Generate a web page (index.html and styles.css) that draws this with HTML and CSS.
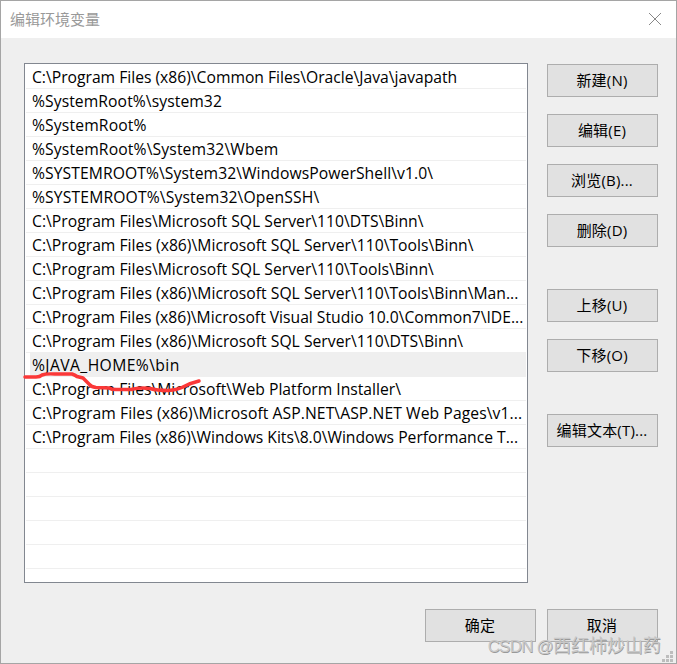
FILE: index.html
```html
<!DOCTYPE html>
<html lang="zh-CN">
<head>
<meta charset="utf-8">
<title>编辑环境变量</title>
<link rel="stylesheet" href="styles.css">
</head>
<body>
<main class="dialog">
  <header class="titlebar">
    <span class="title">编辑环境变量</span>
    <svg class="close" width="14" height="14" viewBox="0 0 14 14"><path d="M1 1L13 13M13 1L1 13"/></svg>
  </header>
  <div class="content">
    <ul class="list">
      <li>C:\Program Files (x86)\Common Files\Oracle\Java\javapath</li>
      <li class="wide">%SystemRoot%\system32</li>
      <li class="wider">%SystemRoot%</li>
      <li class="wider">%SystemRoot%\System32\Wbem</li>
      <li class="wide">%SYSTEMROOT%\System32\WindowsPowerShell\v1.0\</li>
      <li class="wider">%SYSTEMROOT%\System32\OpenSSH\</li>
      <li class="loose">C:\Program Files\Microsoft SQL Server\110\DTS\Binn\</li>
      <li class="loose">C:\Program Files (x86)\Microsoft SQL Server\110\Tools\Binn\</li>
      <li class="loose">C:\Program Files\Microsoft SQL Server\110\Tools\Binn\</li>
      <li class="loose">C:\Program Files (x86)\Microsoft SQL Server\110\Tools\Binn\Man...</li>
      <li>C:\Program Files (x86)\Microsoft Visual Studio 10.0\Common7\IDE...</li>
      <li class="loose">C:\Program Files (x86)\Microsoft SQL Server\110\DTS\Binn\</li>
      <li class="selected">%JAVA_HOME%\bin</li>
      <li>C:\Program Files\Microsoft\Web Platform Installer\</li>
      <li class="wide">C:\Program Files (x86)\Microsoft ASP.NET\ASP.NET Web Pages\v1...</li>
      <li>C:\Program Files (x86)\Windows Kits\8.0\Windows Performance T...</li>
      <li></li><li></li><li></li><li></li><li></li>
    </ul>
    <div class="actions">
      <button>新建(N)</button>
      <button>编辑(E)</button>
      <button>浏览(B)...</button>
      <button>删除(D)</button>
      <button class="group">上移(U)</button>
      <button>下移(O)</button>
      <button class="group">编辑文本(T)...</button>
    </div>
  </div>
  <footer class="footer">
    <button>确定</button>
    <button>取消</button>
  </footer>
  <svg class="marker" width="180" height="24" viewBox="0 0 180 24"><path d="M2 7L13 7Q17 7 19 5Q23 3.500 32 4L49 4Q52 5 54 6.500L60 8L66 14Q68 17 73 17.500L86 18Q89 20 96 19.500L108 19.500Q117 17 127 18.500Q134 20.500 145 20.500Q155 20 162 16Q168 13 176 11"/></svg>
  <div class="watermark"><span class="latin">CSDN @</span>西红柿炒山药</div>
  <svg class="grip" width="11" height="11" viewBox="0 0 11 11"><path d="M8 0h3v3h-3zM4 4h3v3h-3zM8 4h3v3h-3zM0 8h3v3h-3zM4 8h3v3h-3zM8 8h3v3h-3z"/></svg>
</main>
</body>
</html>
```
FILE: styles.css
```css
* { box-sizing: border-box; }
body { margin: 0; font: 15px/20px "Open Sans", "Noto Sans CJK SC", sans-serif; color: #000; }
.dialog { position: relative; width: 677px; height: 664px; border: 1px solid #a5a5a5; background: #efefef; overflow: hidden; }
.titlebar { display: flex; justify-content: space-between; height: 37px; padding: 8px 14px 0 9px; background: #fff; color: #999; }
.close { margin-top: 3px; fill: none; stroke: #888; stroke-width: 1; }
.content { display: flex; gap: 19px; padding: 25px 0 0 23px; }
.list { width: 504px; height: 520px; margin: 0; padding: 1px; list-style: none; background: #fff; border: 1px solid #828790; font-size: 15.7px; letter-spacing: -0.010px; }
.list li { height: 24px; padding-left: 6px; border-bottom: 1px solid #efefef; line-height: 24px; white-space: nowrap; }
.list .loose { letter-spacing: 0.020px; }
.list .wide { letter-spacing: 0.075px; }
.list .wider { letter-spacing: 0.140px; }
.list .selected { margin-left: 4px; padding-left: 2px; background: #efefef; letter-spacing: 0.400px; }
.actions { display: flex; flex-direction: column; gap: 17px; padding-top: 1px; }
button { width: 111px; height: 33px; padding: 0 1px 2px 0; border: 1px solid #adadad; background: #e1e1e1; color: #000; font: inherit; letter-spacing: 0.200px; white-space: nowrap; }
.group { margin-top: 25px; }
.footer { display: flex; justify-content: flex-end; gap: 11px; padding: 26px 18px 0 0; }
.marker { position: absolute; left: 22px; top: 369px; fill: none; stroke: #fb3838; stroke-width: 3.500px; stroke-linecap: round; stroke-linejoin: round; }
.watermark { position: absolute; right: 15px; top: 633px; font: 18px/24px "Liberation Sans", "Noto Sans CJK SC", sans-serif; color: #c8c8c8; text-shadow: 0.500px 1px 0 #999; white-space: nowrap; }
.latin { font-size: 17px; letter-spacing: -0.800px; }
.grip { position: absolute; left: 661px; top: 650px; fill: #bdbdbd; }
```
